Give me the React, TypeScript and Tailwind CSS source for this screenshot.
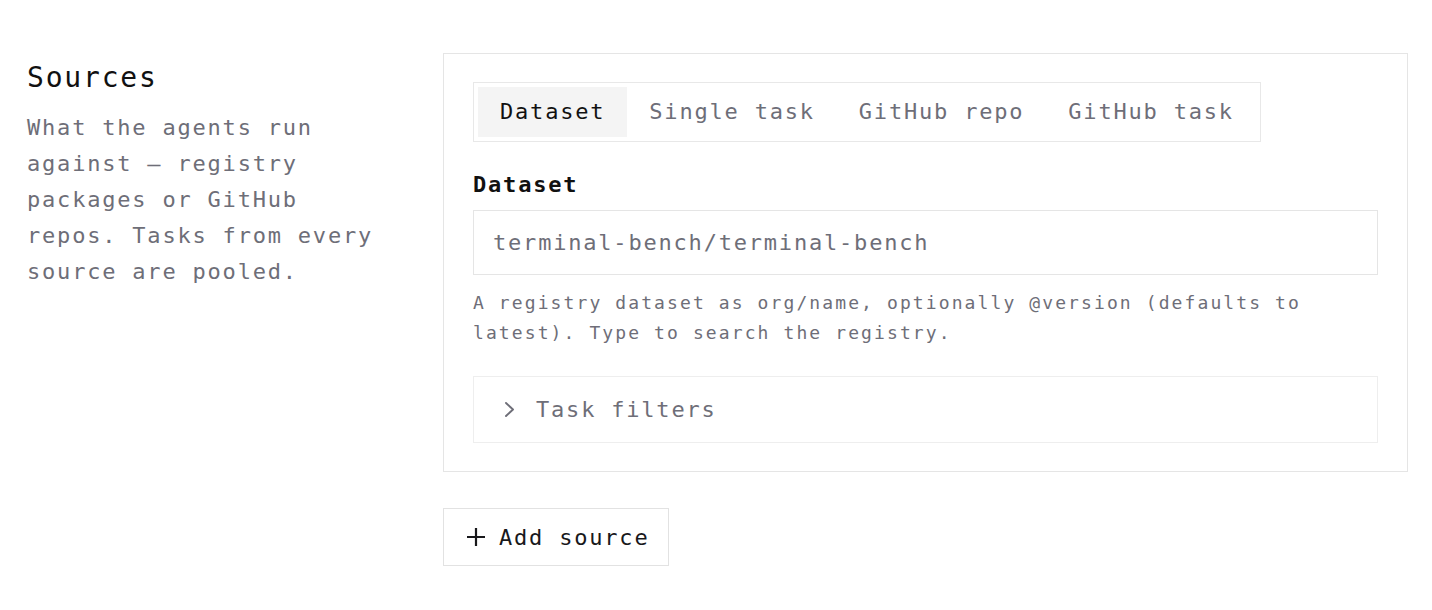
import React, { useState } from "react";

const mono = "font-['DejaVu_Sans_Mono','Liberation_Mono',monospace]";

const TABS = ["Dataset", "Single task", "GitHub repo", "GitHub task"];

function Chevron() {
  return (
    <svg width="12" height="17" viewBox="0 0 12 17" fill="none" className="shrink-0">
      <path d="M2 2 L9 8.5 L2 15" stroke="#6e6e78" strokeWidth="1.9" strokeLinecap="round" strokeLinejoin="round" />
    </svg>
  );
}

function Plus() {
  return (
    <svg width="20" height="20" viewBox="0 0 20 20" fill="none" className="shrink-0">
      <path d="M10 1 V19 M1 10 H19" stroke="#18181b" strokeWidth="2.2" />
    </svg>
  );
}

export default function App() {
  const [active, setActive] = useState("Dataset");

  return (
    <div className={`${mono} min-h-[610px] w-full bg-white flex pl-[27px] pr-[24px] pt-[53px]`}>
      {/* Section intro */}
      <div className="w-[362px] shrink-0 pt-[9px]">
        <h2 className="text-[28px] leading-[32px] tracking-[1.8px] text-[#111111] font-normal">Sources</h2>
        <p className="mt-[16px] text-[22px] leading-[36px] tracking-[1.8px] text-[#6e6e78]">
          What the agents run against – registry packages or GitHub repos. Tasks from every source are pooled.
        </p>
      </div>

      {/* Source editor */}
      <div className="ml-[54px] flex-1 flex flex-col items-start">
        <div className="w-full border border-[#e5e5e5] px-[29px] pt-[28px] pb-[28px]">
          <div className="inline-flex border border-[#e8e8e8] p-[4px]">
            {TABS.map((t) => (
              <button
                key={t}
                onClick={() => setActive(t)}
                className={`h-[50px] px-[22px] text-[22px] leading-[50px] tracking-[1.8px] ${
                  active === t ? "bg-[#f4f4f4] text-[#111111]" : "text-[#6e6e78]"
                }`}
              >
                {t}
              </button>
            ))}
          </div>

          <label className="block mt-[29px] text-[22px] leading-[28px] tracking-[1.8px] font-bold text-[#111111]">
            Dataset
          </label>
          <div className="mt-[11px] h-[65px] border border-[#e5e5e5] px-[19px] flex items-center">
            <span className="text-[22px] tracking-[1.8px] text-[#6e6e78]">terminal-bench/terminal-bench</span>
          </div>
          <p className="mt-[13px] text-[18px] leading-[30px] tracking-[2.1px] text-[#6e6e78]">
            A registry dataset as org/name, optionally @version (defaults to latest). Type to search the registry.
          </p>

          <div className="mt-[28px] h-[67px] border border-[#eeeeee] pl-[30px] flex items-center gap-[20px]">
            <Chevron />
            <span className="text-[22px] tracking-[1.8px] text-[#6e6e78]">Task filters</span>
          </div>
        </div>

        <button className="mt-[36px] h-[58px] border border-[#e2e2e2] pl-[22px] pr-[19px] flex items-center gap-[13px]">
          <Plus />
          <span className="text-[22px] tracking-[1.8px] text-[#18181b]">Add source</span>
        </button>
      </div>
    </div>
  );
}
